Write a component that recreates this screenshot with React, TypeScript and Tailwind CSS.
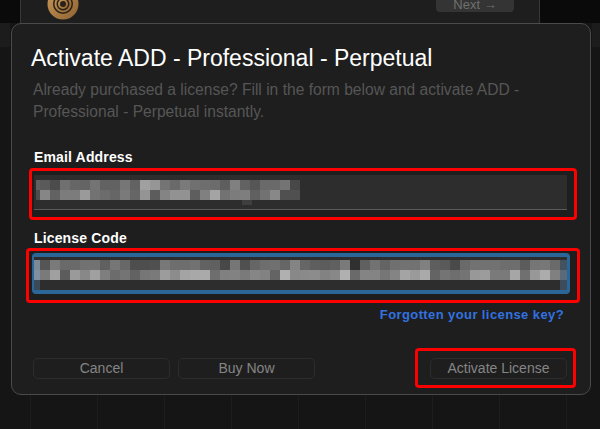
const emailRows = [
  ['#606060', '5a', '4c', '70', '66', '64', '74', '62', '62', '76', '62', 'a0', '96', '74', '6a', '7a', '70', '6e', '6c', '5e', '80', '62', '56', '6a', '6a', '74', '48'],
  ['#4c4c4c', '86', '62', '7c', '7c', '9a', '72', '6c', '66', '7a', '66', '94', '5c', '84', '92', '92', '5e', '80', 'a4', '72', '7c', '7e', '60', '72', '88', '50', '50'],
]

const licenseRows = [
  ['#7a8a98', '55', '7a', '6a', '6a', '72', '72', '60', '76', '68', '4e', '4e', '50', '78', '6e', '6e', '72', '62', '60', '48', '76', '50', '66', '6e', '70', '66', '84', '66', '5e', '5c', '60', '7a', '30', '60', '72', '64', '70', '72', '72', '80', '5e', '5a', '4a', '6a', '72', '72', '72', '6e', '6e', '5c', '76', '78', '6a'],
  ['#8090a0', '7a', 'a0', '5c', '9a', '88', 'a0', '7e', '6c', '74', '62', '76', '7a', '9c', '8c', 'a4', 'a8', 'aa', '6e', '80', '82', '7a', '86', '82', '64', 'b0', '88', '8a', '8c', '82', '88', 'b0', '6a', '84', '84', '76', '84', 'a4', '9a', 'aa', '64', '74', '6e', '74', '98', '9c', '7a', '7a', 'a6', '70', '98', 'ac', '80'],
]

function PixelRow({ cells, first, last }: { cells: string[]; first: number; last?: string }) {
  return (
    <div className="flex h-[10px]">
      <div className="h-full" style={{ width: first, backgroundColor: cells[0] }} />
      {cells.slice(1).map((c, i) => (
        <div key={i} className="h-full w-[10px]" style={{ backgroundColor: `#${c}${c}${c}` }} />
      ))}
      {last && <div className="h-full w-[7px]" style={{ backgroundColor: last }} />}
    </div>
  )
}

function RedBox({ className }: { className: string }) {
  return <div className={`pointer-events-none absolute rounded-[4px] border-[3px] border-[#ff0000] ${className}`} />
}

function FooterButton({ label }: { label: string }) {
  return (
    <button className="flex h-[21px] w-[137px] items-center justify-center rounded-[5px] border border-[#2c2c2c] text-[14px] text-[#858585]">
      {label}
    </button>
  )
}

export default function App() {
  return (
    <div className="relative h-[429px] w-[600px] overflow-hidden bg-[#151515] bg-[linear-gradient(90deg,#1d1d1d_1px,transparent_1px)] bg-[length:67px_100%] bg-[position:30px_0] font-['Liberation_Sans',sans-serif]">
      {/* dimmed page behind the dialog */}
      <div className="flex h-[23px] bg-[#0a0a0a] pl-[20px]">
        <div className="relative flex h-full w-[520px] justify-end overflow-hidden border-x border-[#383838] bg-[#1e1e1e] pr-[25px]">
          <svg className="absolute left-[26px] -top-[12px]" width="32" height="32" viewBox="0 0 32 32">
            <defs>
              <linearGradient id="logo" x1="0" y1="0" x2="1" y2="1">
                <stop offset="0" stopColor="#c9985a" />
                <stop offset="1" stopColor="#8f6230" />
              </linearGradient>
            </defs>
            <circle cx="16" cy="16" r="15.5" fill="url(#logo)" />
            <circle cx="16" cy="16" r="10" fill="#2a2118" />
            <circle cx="16" cy="16" r="8.5" fill="url(#logo)" />
            <circle cx="16" cy="16" r="6.5" fill="#2a2118" />
            <circle cx="16" cy="16" r="5" fill="url(#logo)" />
            <circle cx="16" cy="16" r="3" fill="#2a2118" />
          </svg>
          <div className="flex h-[12px] w-[78px] items-end justify-center rounded-b-[4px] bg-[#343434] text-[13px] leading-[14px] text-[#707070]">
            Next →
          </div>
        </div>
      </div>
      <div className="flex h-[24px] justify-between">
        <div className="h-full w-[10px] bg-[#1c1c1c]" />
        <div className="h-full w-[8px] bg-[#1c1c1c]" />
      </div>

      {/* dialog */}
      <div className="absolute left-[11px] top-[23px] h-[372px] w-[580px] rounded-[10px] border border-[#4a4a4a] bg-[#1e1e1e] pl-[22px] pr-[23px] pt-[20px]">
        <h1 className="-ml-[3px] text-[23px] leading-[28px] text-white">Activate ADD - Professional - Perpetual</h1>
        <p className="-ml-[1px] mt-[7px] w-[510px] text-[15.6px] leading-[22px] text-[#565656]">
          Already purchased a license? Fill in the form below and activate ADD - Professional - Perpetual instantly.
        </p>

        <label className="mt-[25px] block text-[14px] font-bold leading-[18px] tracking-[0.15px] text-white">Email Address</label>
        <div className="relative mt-[9px] h-[35px] border-b border-[#5a5a5a] bg-[#2d2d2d] pl-[2px] pt-[5px]">
          {emailRows.map((row, i) => (
            <PixelRow key={i} cells={row} first={4} />
          ))}
          <div className="ml-[206px] h-[5px] w-[10px] bg-[#3e3e3e]" />
          <RedBox className="-bottom-[11px] -left-[5px] -right-[10px] -top-[7px]" />
        </div>

        <label className="mt-[19px] block text-[14px] font-bold leading-[18px] tracking-[0.15px] text-white">License Code</label>
        <div className="relative -ml-[2px] -mr-[3px] mt-[6px] h-[41px] rounded-[4px] border-y-[4px] border-l-[2px] border-r-[3px] border-[#2b6699] bg-[#2d2d2d] pt-[3px]">
          {licenseRows.map((row, i) => (
            <PixelRow key={i} cells={row} first={6} last={i === 0 ? '#44525e' : '#5a6a78'} />
          ))}
          <div className="flex h-[10px] justify-between">
            <div className="h-full w-[6px] bg-[#3a4a58]" />
            <div className="h-full w-[7px] bg-[#3d4c5a]" />
          </div>
          <RedBox className="-bottom-[13px] -left-[8px] -right-[13px] -top-[9px]" />
        </div>

        <div className="mt-[13px] pr-[3px] text-right text-[13px] font-bold leading-[16px] tracking-[0.4px] text-[#3272e0]">
          Forgotten your license key?
        </div>

        <div className="-ml-[1px] mt-[35px] flex gap-[8px]">
          <FooterButton label="Cancel" />
          <FooterButton label="Buy Now" />
          <div className="relative ml-auto">
            <FooterButton label="Activate License" />
            <RedBox className="-bottom-[9px] -left-[15px] -right-[9px] -top-[10px]" />
          </div>
        </div>
      </div>
    </div>
  )
}
